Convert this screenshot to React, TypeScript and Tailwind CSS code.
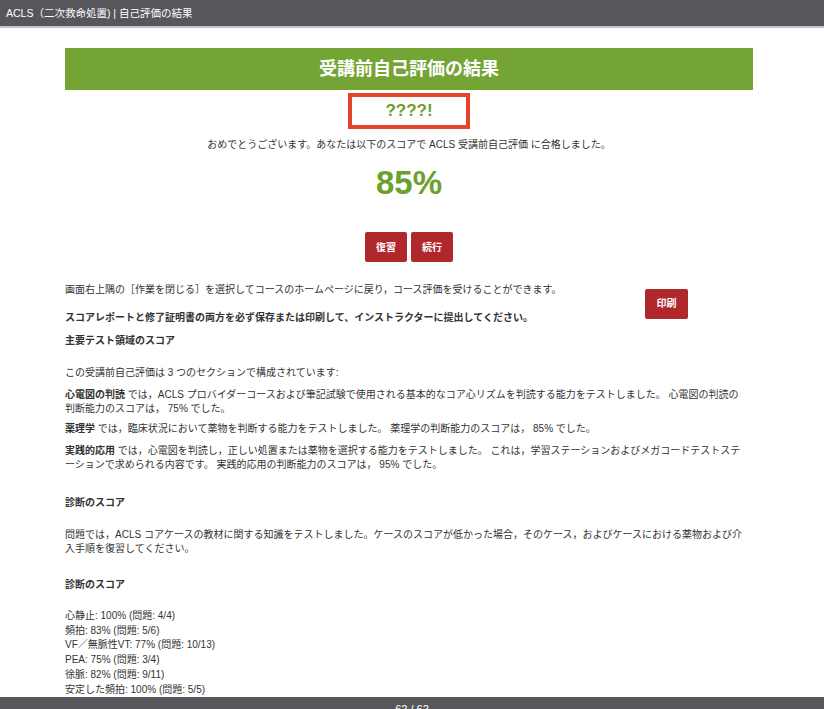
import React from 'react';

const font = "font-['Liberation_Sans','Noto_Sans_CJK_JP',sans-serif]";

const caseScores = [
    '心静止: 100% (問題: 4/4)',
    '頻拍: 83% (問題: 5/6)',
    'VF／無脈性VT: 77% (問題: 10/13)',
    'PEA: 75% (問題: 3/4)',
    '徐脈: 82% (問題: 9/11)',
    '安定した頻拍: 100% (問題: 5/5)',
    '不安定な頻拍: 100% (問題: 1/1)',
];

const RedButton: React.FC<{ label: string; className?: string }> = ({ label, className = '' }) => (
    <button className={`h-[30px] w-[42px] rounded-[2px] bg-[#b0282b] text-[10px] font-bold text-white ${className}`}>
        {label}
    </button>
);

const App: React.FC = () => (
    <div className={`min-h-[709px] bg-white text-[#333] ${font}`}>
        <header className="h-[28px] border-b-2 border-[#c4c4c6] bg-[#56565b] px-[6px] text-[10.5px] leading-[26px] text-white">
            ACLS（二次救命処置) | 自己評価の結果
        </header>

        <main className="ml-[65px] w-[688px] pt-[20px] pb-[40px]">
            <div className="flex h-[42px] items-center justify-center bg-[#74a534] text-[18px] font-bold text-white">
                受講前自己評価の結果
            </div>

            <div className="mx-auto mt-[3px] flex h-[36px] w-[122px] items-center justify-center border-4 border-[#e6432b] text-[17px] font-bold text-[#6ca02d]">
                ????!
            </div>

            <p className="mt-[9px] text-center text-[10px] leading-[14px]">
                おめでとうございます。あなたは以下のスコアで ACLS 受講前自己評価 に合格しました。
            </p>

            <div className="mt-[12px] text-center text-[33px] font-bold leading-[38px] text-[#6ca02d]">85%</div>

            <div className="mt-[30px] flex justify-center gap-[4px]">
                <RedButton label="復習" />
                <RedButton label="続行" />
            </div>

            <section className="mt-[21px] pr-[8px] text-[10px] leading-[14px]">
                <RedButton label="印刷" className="float-right mt-[6px] mr-[57px] w-[43px]" />
                <p>画面右上隅の［作業を閉じる］を選択してコースのホームページに戻り，コース評価を受けることができます。</p>
                <p className="mt-[14px] font-bold">スコアレポートと修了証明書の両方を必ず保存または印刷して、インストラクターに提出してください。</p>
                <p className="mt-[9px] font-bold">主要テスト領域のスコア</p>

                <p className="mt-[18px]">この受講前自己評価は 3 つのセクションで構成されています:</p>
                <p className="mt-[8px]">
                    <b>心電図の判読</b> では，ACLS プロバイダーコースおよび筆記試験で使用される基本的なコア心リズムを判読する能力をテストしました。 心電図の判読の判断能力のスコアは， 75% でした。
                </p>
                <p className="mt-[6px]">
                    <b>薬理学</b> では，臨床状況において薬物を判断する能力をテストしました。 薬理学の判断能力のスコアは， 85% でした。
                </p>
                <p className="mt-[8px]">
                    <b>実践的応用</b> では，心電図を判読し，正しい処置または薬物を選択する能力をテストしました。 これは，学習ステーションおよびメガコードテストステーションで求められる内容です。 実践的応用の判断能力のスコアは， 95% でした。
                </p>

                <p className="mt-[24px] font-bold">診断のスコア</p>
                <p className="mt-[18px]">
                    問題では，ACLS コアケースの教材に関する知識をテストしました。ケースのスコアが低かった場合，そのケース，およびケースにおける薬物および介入手順を復習してください。
                </p>

                <p className="mt-[22px] font-bold">診断のスコア</p>
                <ul className="mt-[17px] leading-[14.7px]">
                    {caseScores.map((line) => (
                        <li key={line}>{line}</li>
                    ))}
                </ul>
            </section>
        </main>

        <footer className="fixed inset-x-0 top-[697px] h-[24px] bg-[#56565b] text-center text-[11px] leading-[24px] text-white">
            62 / 62
        </footer>
    </div>
);

export default App;
